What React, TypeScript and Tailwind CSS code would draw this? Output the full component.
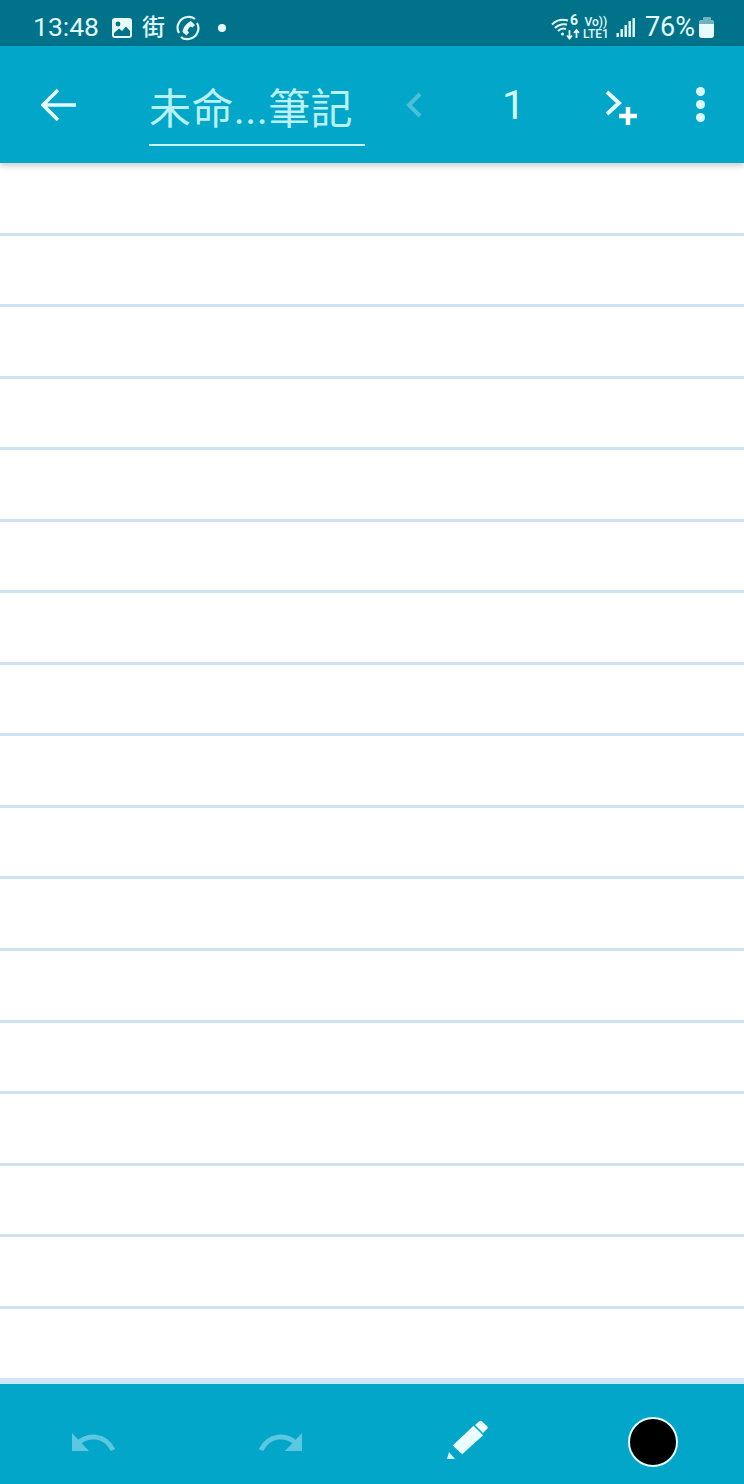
const rows = Array.from({ length: 17 }, (_, i) => i);

function Wifi() {
  return (
    <svg width="30" height="24" viewBox="0 0 30 24" fill="none" className="shrink-0">
      <path d="M1 8.5C5 4.5 11 3 17 4.5" stroke="#e4fbfd" strokeWidth="2" />
      <path d="M4 12C7 9 11 7.5 16 8.5" stroke="#e4fbfd" strokeWidth="2" />
      <path d="M7 15C9 13 12 12 15 13" stroke="#e4fbfd" strokeWidth="2" />
      <circle cx="11.5" cy="18" r="1.6" fill="#e4fbfd" />
      <path d="M18.5 14V22M16 19.5L18.5 22.5L21 19.5" stroke="#e4fbfd" strokeWidth="1.8" />
      <path d="M25.5 22V14.5M23 17L25.5 14L28 17" stroke="#e4fbfd" strokeWidth="1.8" />
    </svg>
  );
}

function Signal() {
  return (
    <svg width="20" height="22" viewBox="0 0 20 22" className="shrink-0">
      <rect x="0.5" y="16" width="2.4" height="4" fill="#e4fbfd" />
      <rect x="4.5" y="12" width="2.4" height="8" fill="#e4fbfd" />
      <rect x="8.5" y="8" width="2.4" height="12" fill="#e4fbfd" />
      <rect x="12.5" y="4" width="2.4" height="16" fill="#e4fbfd" />
      <rect x="16.5" y="1" width="2.4" height="19" fill="#e4fbfd" />
    </svg>
  );
}

export default function App() {
  return (
    <div className="flex h-[1484px] w-[744px] flex-col overflow-hidden bg-white font-['Roboto','Noto_Sans_CJK_TC',sans-serif]">
      <div className="flex h-[46px] shrink-0 items-center justify-between bg-[#00728a] pl-[33px] pr-[30px] pt-[9px] text-[#e2fafc]">
        <div className="flex items-center">
          <span className="text-[26.5px] leading-none">13:48</span>
          <svg width="22" height="22" viewBox="0 0 22 22" className="ml-[12px] shrink-0">
            <rect x="1" y="1" width="20" height="20" rx="3" fill="#e8fcfe" />
            <circle cx="7" cy="7" r="2.4" fill="#00728a" />
            <path d="M3 16L8 11.5L11 14L15 9.5L19 14V19H3Z" fill="#00728a" />
          </svg>
          <span className="ml-[9px] text-[23px] font-medium leading-none">街</span>
          <svg width="28" height="26" viewBox="0 0 28 26" fill="none" className="ml-[9px] shrink-0">
            <path d="M5 18C1 11 6 3 13 2C16 1.5 19 2 21 4" stroke="#e4fbfd" strokeWidth="2.2" />
            <path d="M23 8C27 15 22 23 15 24C12 24.5 9 24 7 22" stroke="#e4fbfd" strokeWidth="2.2" />
            <path d="M17 6L21 10L18.5 12.5L16.5 11.5C15 13 14 14 13.5 15.5L15 17.5L12.5 20.5L8.5 17C9 12.5 12.5 8 17 6Z" fill="#e4fbfd" />
          </svg>
          <span className="ml-[16px] size-[8px] rounded-full bg-[#e8fcfe]" />
        </div>
        <div className="flex items-center">
          <div className="relative h-[24px] w-[30px]">
            <Wifi />
            <span className="absolute left-[19px] top-[-3px] text-[14px] font-bold leading-none">6</span>
          </div>
          <div className="ml-[1px] flex w-[28px] flex-col items-center text-[12px] font-medium leading-[12px]">
            <span>Vo))</span>
            <span>LTE1</span>
          </div>
          <div className="ml-[6px]">
            <Signal />
          </div>
          <span className="ml-[9px] text-[27px] leading-none">76%</span>
          <div className="ml-[4px] flex flex-col items-center">
            <span className="h-[3px] w-[8px] rounded-t-[1px] bg-[#6fb1bf]" />
            <div className="h-[18px] w-[15px] overflow-hidden rounded-[3px] bg-[#e8fcfe]">
              <div className="h-[4px] bg-[#6fb1bf]" />
            </div>
          </div>
        </div>
      </div>

      <div className="z-10 flex h-[117px] shrink-0 items-center bg-[#02a6c8] shadow-[0_3px_6px_rgba(0,0,0,0.2)]">
        <svg width="36" height="34" viewBox="0 0 36 34" fill="none" className="ml-[41px] shrink-0">
          <path d="M35 17H3M17 2L2 17L17 32" stroke="#e6fcfe" strokeWidth="3.6" />
        </svg>
        <div className="ml-[72px] mt-[10px] flex h-[72px] w-[216px] shrink-0 items-center border-b-2 border-[#c8f6fa] pt-[3px] text-[42px] leading-none tracking-[0.4px] text-[#b9f1f6]">
          未命...筆記
        </div>
        <svg width="18" height="26" viewBox="0 0 18 26" fill="none" className="ml-[40px] shrink-0">
          <path d="M15 2L4 13L15 24" stroke="#4dbfd9" strokeWidth="4" />
        </svg>
        <span className="ml-[79px] mt-[2px] w-[20px] text-[41px] leading-none text-[#d5f8fb]">1</span>
        <svg width="34" height="38" viewBox="0 0 34 38" fill="none" className="ml-[83px] mt-[8px] shrink-0">
          <path d="M2 2L14 13L2 24" stroke="#e6fcfe" strokeWidth="4" />
          <path d="M23 17V35M14 26H32" stroke="#ffffff" strokeWidth="4.5" />
        </svg>
        <div className="ml-[57px] flex flex-col gap-[4px]">
          <span className="size-[9px] rounded-full bg-[#dbfafc]" />
          <span className="size-[9px] rounded-full bg-[#dbfafc]" />
          <span className="size-[9px] rounded-full bg-[#dbfafc]" />
        </div>
      </div>

      <div className="flex-1 pt-[1px]">
        {rows.map((i) => (
          <div
            key={i}
            className={
              i === 16
                ? "h-[75px] border-b-[6px] border-[#cfe6f6]"
                : "h-[71.56px] border-b-[3px] border-[#cfe2f3]"
            }
          />
        ))}
      </div>

      <div className="flex h-[100px] shrink-0 items-center bg-[#02a6c8]">
        <svg width="44" height="20" viewBox="0 0 44 20" fill="none" className="ml-[72px] mt-[18px] shrink-0">
          <path d="M0 0V18H17Z" fill="#5bc7e0" />
          <path d="M6 10C16 1 33 1 41 17" stroke="#5bc7e0" strokeWidth="5" />
        </svg>
        <svg width="44" height="20" viewBox="0 0 44 20" fill="none" className="ml-[142px] mt-[18px] shrink-0">
          <path d="M44 0V18H27Z" fill="#5bc7e0" />
          <path d="M38 10C28 1 11 1 3 17" stroke="#5bc7e0" strokeWidth="5" />
        </svg>
        <svg width="44" height="40" viewBox="0 0 44 40" className="ml-[144px] mt-[12px] shrink-0">
          <path d="M1 39L3 32L9 39Z" fill="#def9fc" />
          <path d="M6 28L28 7L38 17L16 37Z" fill="#eafdff" transform="translate(1 -1) scale(0.95)" />
          <path d="M29 5L33 1.5C34 0.5 35 0.5 36 1.5L41 6C42 7 42 8 41 9L37 13Z" fill="#eafdff" />
        </svg>
        <div className="ml-[138px] mt-[16px] size-[50px] rounded-full border-2 border-[#e6fcfe] bg-black" />
      </div>
    </div>
  );
}
